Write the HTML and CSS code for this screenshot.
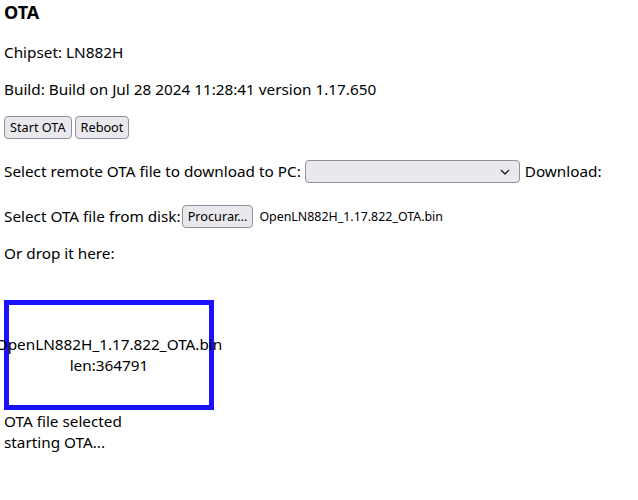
FILE: index.html
```html
<!DOCTYPE html>
<html lang="pt">
<head>
<meta charset="utf-8">
<title>OTA</title>
<link rel="stylesheet" href="styles.css">
</head>
<body>
<h3 class="title">OTA</h3>
<div class="row chipset">Chipset: LN882H</div>
<div class="row build">Build: Build on Jul 28 2024 11:28:41 version 1.17.650</div>
<div class="row actions">
  <button class="btn">Start OTA</button>
  <button class="btn">Reboot</button>
</div>
<div class="row remote">
  <span>Select remote OTA file to download to PC:</span>
  <span class="select-wrap">
    <select class="select"><option></option></select>
    <svg class="chev" width="10" height="6" viewBox="0 0 10 6"><path d="M1 1 L5 5 L9 1" fill="none" stroke="#222" stroke-width="1.4"/></svg>
  </span>
  <span>Download:</span>
</div>
<div class="row disk">
  <span>Select OTA file from disk:</span>
  <button class="btn file-btn">Procurar...</button>
  <span class="file-name">OpenLN882H_1.17.822_OTA.bin</span>
</div>
<div class="row drop-label">Or drop it here:</div>
<div class="drop">
  <div>OpenLN882H_1.17.822_OTA.bin</div>
  <div>len:364791</div>
</div>
<div class="status">
  <div>OTA file selected</div>
  <div>starting OTA...</div>
</div>
</body>
</html>
```

FILE: styles.css
```css
html, body {
  margin: 0;
  padding: 0;
  background: #fff;
}
body {
  padding-left: 4px;
  font-family: "Noto Sans", "Open Sans", sans-serif;
  font-size: 15.3px;
  line-height: 21px;
  color: #000;
}
.title {
  margin: 0;
  font-size: 18px;
  line-height: 24px;
  font-weight: bold;
}
.row {
  display: flex;
  align-items: center;
  white-space: nowrap;
}
.chipset { margin-top: 18px; height: 21px; }
.build { margin-top: 16px; height: 21px; }
.actions { margin-top: 16px; height: 22px; gap: 3px; }
.remote { margin-top: 22px; height: 23px; }
.disk { margin-top: 22px; height: 22px; }
.drop-label { margin-top: 16px; height: 21px; }

.btn {
  font-family: inherit;
  font-size: 12.7px;
  line-height: 18px;
  height: 23px;
  padding: 0 5px;
  margin: 0;
  color: #000;
  background: #e9e9ed;
  border: 1px solid #8f8f9d;
  border-radius: 4px;
}
.select-wrap {
  position: relative;
  display: inline-flex;
  margin: 0 5px 0 4px;
}
.select {
  appearance: none;
  -webkit-appearance: none;
  box-sizing: border-box;
  width: 215px;
  height: 23px;
  margin: 0;
  background: #e9e9ed;
  border: 1px solid #8f8f9d;
  border-radius: 4px;
  font-family: inherit;
  font-size: 12.7px;
}
.chev {
  position: absolute;
  right: 10px;
  top: 9px;
  pointer-events: none;
}
.file-btn { margin-left: 1px; }
.file-name {
  font-size: 12.4px;
  margin-left: 6px;
}
.drop {
  margin-top: 36px;
  width: 200px;
  height: 100px;
  border: 5px solid #1a12ff;
  display: flex;
  flex-direction: column;
  align-items: center;
  justify-content: center;
  text-align: center;
  white-space: nowrap;
  font-size: 15.3px;
}
.status {
  margin-top: 1px;
}
```
